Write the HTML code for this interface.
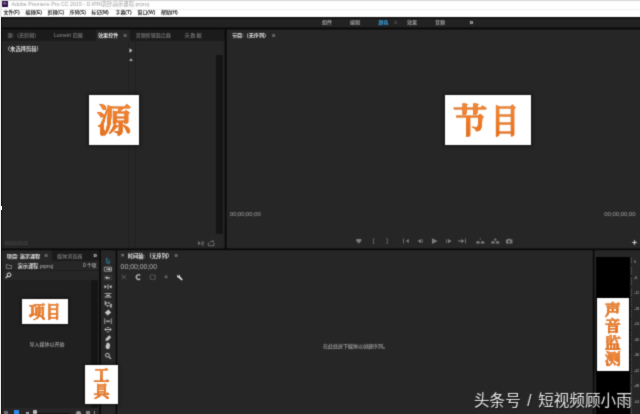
<!DOCTYPE html>
<html lang="zh-CN">
<head>
<meta charset="utf-8">
<title>Adobe Premiere Pro CC 2015</title>
<style>
html,body{margin:0;padding:0;}
body{width:640px;height:414px;overflow:hidden;background:#0c0c0c;position:relative;
 font-family:"Liberation Sans","Noto Sans CJK SC",sans-serif;}
#wrap{position:absolute;left:-10px;top:-10px;width:660px;height:434px;overflow:hidden;background:#0c0c0c;filter:url(#soft);}
#app{position:absolute;left:10px;top:10px;width:640px;height:414px;background:#262626;}
.abs{position:absolute;}
.t{position:absolute;white-space:nowrap;line-height:1;text-shadow:0 0 0.5px currentColor;}
.panel{position:absolute;background:#262626;}
.dk{position:absolute;background:#1b1b1b;}
.trk{position:absolute;background:#151515;}
.lbl.sm span{-webkit-text-stroke:0.3px #ee771f;font-weight:600;}
.lbl.bg span{-webkit-text-stroke:0.45px #ee771f;font-weight:600;}
.lbl{position:absolute;background:#fff;color:#ec7b30;font-family:"Liberation Serif","Noto Serif CJK SC",serif;font-weight:700;text-align:center;box-shadow:0 0 3px 1px rgba(0,0,0,.5);}
.lbl span{display:block;background:linear-gradient(to bottom,#f58d40 12%,#f07a22 50%,#e46a18 88%);-webkit-background-clip:text;background-clip:text;color:transparent;-webkit-text-fill-color:transparent;filter:drop-shadow(0.5px 0.6px 0.5px rgba(140,70,20,.7));}
svg{position:absolute;overflow:visible;}
</style>
</head>
<body>
<svg width="0" height="0" style="position:absolute"><defs><filter id="soft" x="0" y="0" width="100%" height="100%" color-interpolation-filters="sRGB"><feConvolveMatrix order="3" kernelMatrix="0.03 0.1 0.03 0.1 0.48 0.1 0.03 0.1 0.03" divisor="1" edgeMode="duplicate" preserveAlpha="true"/></filter></defs></svg>
<div id="wrap"><div id="app">
 <!-- title bar + menu -->
 <div class="abs" style="left:-10px;top:-10px;width:660px;height:27.4px;background:#fff;"></div>
 <div class="abs" style="left:-10px;top:-10px;width:660px;height:10.7px;background:#d9d6dc;"></div>
 <div class="abs" style="left:2.2px;top:1.4px;width:5.6px;height:5.3px;background:#230c3c;"></div>
 <div class="t" style="left:3.4px;top:2.7px;font-size:3.2px;color:#c9a6ee;font-weight:700;text-shadow:none;">Pr</div>
 <div class="t" style="left:11.5px;top:1.7px;font-size:5.3px;color:#9c9c9c;text-shadow:none;">Adobe Premiere Pro CC 2015 - D:\PR项目\演示课程.prproj</div>
 <div class="abs" style="left:0;top:8.6px;width:640px;height:0.8px;background:#eee;"></div>
 <div class="t" style="left:3.5px;top:10.7px;font-size:4.9px;color:#333;">
  <span style="position:absolute;left:0">文件(F)</span>
  <span style="position:absolute;left:22px">编辑(E)</span>
  <span style="position:absolute;left:44px">剪辑(C)</span>
  <span style="position:absolute;left:66px">序列(S)</span>
  <span style="position:absolute;left:88px">标记(M)</span>
  <span style="position:absolute;left:112px">字幕(T)</span>
  <span style="position:absolute;left:134px">窗口(W)</span>
  <span style="position:absolute;left:157.5px">帮助(H)</span>
 </div>

 <!-- workspace bar -->
 <div class="abs" style="left:1px;top:17.4px;width:649px;height:10.3px;background:linear-gradient(to bottom,#101010 0,#131313 1.4px,#222 2.2px,#222 100%);"></div>
 <div class="t" style="left:322px;top:20.2px;font-size:5px;color:#9a9a9a;">组件</div>
 <div class="t" style="left:350px;top:20.2px;font-size:5px;color:#9a9a9a;">编辑</div>
 <div class="t" style="left:378.5px;top:20.2px;font-size:5px;color:#3aa0e0;">颜色</div>
 <div class="t" style="left:394.5px;top:20px;font-size:5px;color:#555;">≡</div>
 <div class="t" style="left:407px;top:20.2px;font-size:5px;color:#9a9a9a;">效果</div>
 <div class="t" style="left:435px;top:20.2px;font-size:5px;color:#9a9a9a;">音频</div>
 <div class="t" style="left:469.6px;top:18.6px;font-size:7px;color:#c4c4c4;">»</div>

 <!-- source / effect controls panel -->
 <div class="panel" style="left:2px;top:29.6px;width:222.8px;height:218.9px;"></div>
 <div class="dk" style="left:2px;top:29.6px;width:222.8px;height:11.4px;"></div>
 <div class="abs" style="left:95.5px;top:29.6px;width:34.5px;height:11.4px;background:#262626;"></div>
 <div class="t" style="left:7.4px;top:33.2px;font-size:5.1px;color:#6c6c6c;">源:（无剪辑）</div>
 <div class="t" style="left:54px;top:33.2px;font-size:5.1px;color:#6c6c6c;">Lumetri 范围</div>
 <div class="t" style="left:98px;top:33.2px;font-size:5.1px;color:#e2e2e2;">效果控件</div>
 <div class="t" style="left:123.5px;top:32.8px;font-size:5.6px;color:#777;">≡</div>
 <div class="t" style="left:135.8px;top:33.2px;font-size:5px;color:#6c6c6c;">音频剪辑混合器</div>
 <div class="t" style="left:184.5px;top:33.2px;font-size:5.1px;color:#6c6c6c;letter-spacing:0.9px;">元数据</div>
 <div class="t" style="left:4.8px;top:47.4px;font-size:5.3px;color:#d4d4d4;">（未选择剪辑）</div>
 <div class="trk" style="left:215.7px;top:54.5px;width:7px;height:179px;"></div>
 <div class="abs" style="left:128.4px;top:41px;width:0.8px;height:207px;background:#212121;"></div><div class="abs" style="left:135.2px;top:41px;width:0.8px;height:207px;background:#202020;"></div>
 <svg style="left:128.8px;top:48px;" width="4" height="5" viewBox="0 0 4 5"><path d="M0.5 0.3 L3.4 2.5 L0.5 4.7 Z" fill="#cfcfcf"/></svg>
 <svg style="left:129px;top:58px;" width="4" height="3" viewBox="0 0 4 3"><path d="M0.2 2.8 L2 0.4 L3.8 2.8 Z" fill="#cfcfcf"/></svg>
 <div class="t" style="left:5.3px;top:241.4px;font-size:5.8px;color:#454545;transform:scaleX(0.75);transform-origin:0 0;">00;00;00;00</div>
 <svg style="left:197.4px;top:240.4px;" width="19" height="7.4" viewBox="0 0 20 8" fill="none" stroke="#7c7c7c" stroke-width="0.9">
  <path d="M1 1.2 L3.6 3.5 L1 5.8 Z" fill="#7c7c7c" stroke="none"/><path d="M4.6 2 h2 v1.6 h-1.6 v1.8 h2"/>
  <path d="M12 2.8 v3.4 h6 v-3.4"/><path d="M13.6 2.6 q1.5 -2.2 3.6 -1.2 M17.4 0.4 v1.4 h-1.4"/>
 </svg>

 <!-- program panel -->
 <div class="panel" style="left:226.8px;top:29.6px;width:424px;height:218.9px;"></div>
 <div class="t" style="left:232px;top:33.2px;font-size:5.1px;color:#e2e2e2;">节目:（无序列）</div>
 <div class="t" style="left:272px;top:32.8px;font-size:5.6px;color:#777;">≡</div>
 <div class="t" style="left:230px;top:212px;font-size:5.8px;color:#7c7c7c;">00;00;00;00</div>
 <div class="t" style="left:604.3px;top:212px;font-size:5.95px;color:#7c7c7c;">00;00;00;00</div>
 <!-- transport -->
 <svg style="left:350px;top:236px;" width="170" height="10" viewBox="0 0 170 10" fill="#7e7e7e" stroke="none">
  <path d="M6.3 3 h5 v2 l-2.5 2.4 l-2.5 -2.4 z"/>
  <path d="M24.3 2.6 h-0.9 v5 h0.9" fill="none" stroke="#7e7e7e" stroke-width="0.7"/>
  <path d="M36.4 2.6 h0.9 v5 h-0.9" fill="none" stroke="#7e7e7e" stroke-width="0.7"/>
  <path d="M53 2.6 h0.8 v5 h-0.8 z M54.6 5.1 h1.2 v-0 l3 -2 v4 l-3 -2 z"/>
  <path d="M67.5 5.1 l3.6 -2.2 v4.4 z M71.8 3.2 h0.8 v3.8 h-0.8 z"/>
  <path d="M82 2.2 l5.6 2.9 l-5.6 2.9 z"/>
  <path d="M96.3 3.2 h0.8 v3.8 h-0.8 z M98 2.9 l3.6 2.2 l-3.6 2.2 z"/>
  <path d="M108 4.6 h3.4 v-1.6 l3 2.1 l-3 2.1 v-1.6 h-3.4 z M115 2.6 h0.8 v5 h-0.8 z"/>
  <path d="M126.2 7.6 a1.9 1.9 0 1 1 3.6 0 z M130.8 7.6 a1.9 1.9 0 1 1 3.6 0 z M129.6 3.4 l0.7 -1.6 l0.7 1.6 z"/>
  <path d="M141.2 7.6 a1.9 1.9 0 1 1 3.6 0 z M145.8 7.6 a1.9 1.9 0 1 1 3.6 0 z M143.6 3.6 h1 v-1 h1.4 v1 h1 l-1.7 1.4 z"/>
  <path d="M156 3.6 h1.6 l0.6 -0.9 h2 l0.6 0.9 h1.6 v4 h-6.4 z"/>
  <circle cx="159.2" cy="5.6" r="1.1" fill="#242424"/>
 </svg>
 <svg style="left:630.5px;top:238.5px;" width="7" height="7" viewBox="0 0 7 7"><path d="M3.5 1.2 v4.6 M1.2 3.5 h4.6" stroke="#cfcfcf" stroke-width="1.2" fill="none"/></svg>

 <!-- project panel -->
 <div class="panel" style="left:2px;top:250.2px;width:97.3px;height:174px;"></div>
 <div class="abs" style="left:4px;top:280px;width:86.5px;height:127.5px;background:#202020;"></div>
 <div class="dk" style="left:51.5px;top:250.2px;width:47.8px;height:10.6px;"></div>
 <div class="t" style="left:6.8px;top:253.6px;font-size:5.1px;color:#e2e2e2;">项目: 演示课程</div>
 <div class="t" style="left:44.5px;top:253.2px;font-size:5.6px;color:#777;">≡</div>
 <div class="t" style="left:57.3px;top:253.6px;font-size:5px;color:#6c6c6c;">媒体浏览器</div>
 <div class="t" style="left:93.2px;top:252px;font-size:7px;color:#c4c4c4;">»</div>
 <svg style="left:5.8px;top:263.6px;" width="6" height="5.2" viewBox="0 0 7 6"><path d="M0.5 0.8 h2.2 l0.7 0.9 h3 v3.6 h-5.9 z" fill="none" stroke="#9a9a9a" stroke-width="0.8"/></svg>
 <div class="t" style="left:17.5px;top:263.5px;font-size:5.2px;color:#d4d4d4;">演示课程<span style="color:#8a8a8a">.prproj</span></div>
 <div class="t" style="left:83px;top:263.8px;font-size:4.8px;color:#9a9a9a;">0 个项</div>
 <div class="abs" style="left:2px;top:269.7px;width:97.3px;height:0.9px;background:#1e1e1e;"></div>
 
 <svg style="left:4.5px;top:271.8px;" width="7" height="7" viewBox="0 0 7 7"><circle cx="4" cy="2.8" r="1.9" fill="none" stroke="#e6e6e6" stroke-width="1"/><path d="M2.6 4.2 L0.7 6.2" stroke="#e6e6e6" stroke-width="1.2"/></svg>
 <div class="trk" style="left:90.5px;top:280px;width:7px;height:127.5px;"></div>
 <div class="t" style="left:29.6px;top:341.6px;font-size:5px;color:#8c8c8c;">导入媒体以开始</div>
 <!-- project bottom bar -->
 <div class="abs" style="left:3.5px;top:411px;width:4.5px;height:4px;background:#6e6e6e;"></div>
 <div class="abs" style="left:14.3px;top:410.3px;width:4.8px;height:5px;background:#2d8ceb;"></div>
 <div class="abs" style="left:26px;top:412px;width:3px;height:2px;background:#aaa;"></div>
 <div class="abs" style="left:33px;top:410px;width:3.5px;height:4px;background:#bbb;border-radius:1px 1px 0 0;"></div>
 <div class="abs" style="left:37px;top:412.6px;width:32px;height:1.4px;background:#111;"></div>
 <div class="abs" style="left:76px;top:410.5px;width:5px;height:4px;background:#999;border-radius:2.5px 2.5px 0 0;"></div>
 <div class="abs" style="left:86px;top:410.5px;width:4px;height:4px;background:#888;"></div>
 <div class="abs" style="left:93.5px;top:410.5px;width:1.5px;height:4px;background:#888;"></div>

 <!-- tools panel -->
 <div class="panel" style="left:100.9px;top:250.2px;width:14.8px;height:174px;"></div>
 <svg style="left:102px;top:254px;" width="13" height="108" viewBox="0 0 13 108" fill="#c6c6c6" stroke="none">
  <!-- selection (active, blue) -->
  <path d="M4.4 3.9 L4.4 9.2 L5.6 8.1 L6.5 10 L7.3 9.6 L6.5 7.8 L8 7.6 Z" fill="none" stroke="#35809f" stroke-width="0.8"/>
  <!-- track select fwd -->
  <path d="M2.3 13.2 h7.2 v4 h-7.2 z" fill="none" stroke="#c6c6c6" stroke-width="0.7"/><path d="M4.4 14.6 h2.6 v-0.9 l2 1.5 l-2 1.5 v-0.9 h-2.6 z"/>
  <!-- track select back -->
  <path d="M2.5 21.8 h7.2 v4 h-7.2 z" fill="none" stroke="#777" stroke-width="0.6" stroke-dasharray="1 1"/><path d="M7.8 23.2 h-2.6 v-0.9 l-2.4 1.5 l2.4 1.5 v-0.9 h2.6 z"/>
  <!-- ripple -->
  <path d="M5.6 30.2 h0.9 v5 h-0.9 z M5 32.7 l-2.6 -1.7 v3.4 z M7.1 32.7 l2.6 -1.7 v3.4 z"/>
  <!-- rolling -->
  <path d="M2.6 39.2 h6.8 v0.9 h-6.8 z M2.6 42.6 h6.8 v0.9 h-6.8 z M4.4 40.8 h3.4 v1.1 h-3.4 z"/>
  <!-- rate stretch -->
  <path d="M3 47.4 h0.8 v3.4 h-0.8 z M4 49.1 h2.6 v-1 l1.6 1.4 M8.6 50 h0.8 v3.4 h-0.8 z M8.4 51.7 h-2.6 v1 l-1.6 -1.4" stroke="#c6c6c6" stroke-width="0.6"/>
  <!-- razor -->
  <path d="M2.8 58.6 l3.6 -3.2 l2.8 3 l-3.6 3.2 z"/>
  <!-- slip -->
  <path d="M2.4 64.4 h0.8 v5.6 h-0.8 z M8.8 64.4 h0.8 v5.6 h-0.8 z M3.8 67.2 l1.6 -1.3 v0.9 h1.2 v-0.9 l1.6 1.3 l-1.6 1.3 v-0.9 h-1.2 v0.9 z"/>
  <!-- slide -->
  <path d="M2.2 75.6 l1.8 -1.5 v1 h4 v-1 l1.8 1.5 l-1.8 1.5 v-1 h-4 v1 z M4.6 73 h2.8 v0.8 h-2.8 z M4.6 77.4 h2.8 v0.8 h-2.8 z"/>
  <!-- pen -->
  <path d="M3.4 87 l0.6 -2.6 l3.2 -3.2 l2 2 l-3.2 3.2 z"/>
  <!-- hand -->
  <path d="M3.6 92.4 q0 -1.6 0.8 -1.6 v-1.6 h0.8 v-0.6 h0.9 v0.4 h0.9 v0.5 h0.9 v2 q0 2.6 -1 3.6 h-2.2 q-1.1 -1.3 -1.1 -2.7 z"/>
  <!-- zoom -->
  <circle cx="5.4" cy="101.2" r="1.9" fill="none" stroke="#c6c6c6" stroke-width="1"/><path d="M6.9 102.7 L9 104.9" stroke="#c6c6c6" stroke-width="1.2"/>
 </svg>

 <!-- timeline panel -->
 <div class="panel" style="left:117.2px;top:250.2px;width:475.6px;height:174px;"></div>
 <div class="t" style="left:121px;top:253px;font-size:5.6px;color:#9a9a9a;">×</div>
 <div class="t" style="left:127.8px;top:253.6px;font-size:5.2px;color:#e2e2e2;">时间轴: （无序列）</div>
 <div class="t" style="left:174.5px;top:253.2px;font-size:5.6px;color:#777;">≡</div>
 <div class="t" style="left:120.6px;top:263.6px;font-size:6.9px;color:#8a8a8a;">00;00;00;00</div>
 <svg style="left:120px;top:272.5px;" width="66" height="8" viewBox="0 0 66 8" fill="none">
  <path d="M1.6 1.6 L6 6.4 M6 1.6 L1.6 6.4 M2 4 h3.6" stroke="#5c5c5c" stroke-width="0.8"/>
  <path d="M20.2 2.4 a2.3 2.3 0 1 0 0 3.4" stroke="#bdbdbd" stroke-width="1.3"/>
  <path d="M30.4 2 h4.6 v4.4 h-4.6 z M29.6 3 h1 M29.6 5.2 h1 M35 3 h1 M35 5.2 h1" stroke="#5c5c5c" stroke-width="0.8"/>
  <path d="M44.6 2.4 h3 v1.8 l-1.5 1.6 l-1.5 -1.6 z" fill="#5c5c5c"/>
  <path d="M58.2 1.4 a2 2 0 0 0 -0.4 3.2 l0.9 0.2 l3 2.6 l1 -1 l-2.8 -2.8 l-0.1 -0.9 a2 2 0 0 0 -0.4 -1.1 l-0.6 1.4 l-0.9 -0.3 z" fill="#efefef"/>
 </svg>
 <div class="t" style="left:323px;top:343.6px;font-size:5px;color:#8c8c8c;">在此处放下媒体以创建序列。</div>

 <!-- audio meters -->
 <div class="panel" style="left:594.4px;top:250.2px;width:56px;height:174px;"></div>
 <div class="abs" style="left:596.3px;top:257.4px;width:34px;height:167px;background:#000;"></div>
 <div class="abs" style="left:630.6px;top:258px;width:1.4px;height:166px;background:repeating-linear-gradient(to bottom,#666 0,#666 0.9px,transparent 0.9px,transparent 2.2px);"></div>
 <div class="t" style="left:634px;top:255.1px;font-size:3.6px;color:#8a8a8a;line-height:15.5px;">0<br>-6<br>-12<br>-18<br>-24<br>-30<br>-36<br>-42<br>-48<br>-54</div>

 <!-- dividers -->
 <svg style="left:0;top:0;" width="650" height="424" viewBox="0 0 650 424" fill="#090909">
  <rect x="0" y="27.5" width="650" height="2"/>
  <rect x="0" y="248.4" width="650" height="1.8"/>
  <rect x="224.7" y="28" width="1.9" height="221"/>
  <rect x="99.2" y="249" width="1.7" height="175"/>
  <rect x="115.7" y="249" width="1.5" height="175"/>
  <rect x="592.8" y="249" width="1.6" height="175"/>
  <rect x="0" y="17" width="2" height="407"/>
 </svg>

 <!-- overlay labels -->
 <div class="lbl bg" style="left:89px;top:94.5px;width:50px;height:50px;font-size:33.5px;line-height:52.6px;"><span style="transform:scaleX(1.04)">源</span></div>
 <div class="lbl bg" style="left:444.5px;top:94.5px;width:86.5px;height:50px;font-size:34px;line-height:53px;"><span style="display:inline-block;transform:scaleX(1.02)">节</span><span style="display:inline-block;transform:scaleX(0.82);margin-left:0.6px;">目</span></div>
 <div class="lbl sm" style="left:22px;top:298.5px;width:46px;height:25.7px;font-size:16.5px;line-height:28.8px;"><span style="display:inline-block;">项</span><span style="display:inline-block;transform:scaleX(0.88);margin-left:-0.4px;">目</span></div>
 <div class="lbl sm" style="left:85.1px;top:364.9px;width:32.7px;height:39px;font-size:16px;line-height:16.6px;"><div style="padding-top:2.9px"><span>工</span><span>具</span></div></div>
 <div class="lbl sm" style="left:597.4px;top:298.3px;width:31.6px;height:72.7px;font-size:15px;line-height:16.4px;"><div style="padding-top:3.6px;transform:scaleX(1.07);"><span>声</span><span>音</span><span>监</span><span>测</span></div></div>

 <!-- watermark -->
 <div class="t" style="left:474px;top:392.8px;font-size:15.6px;color:#e9e9e9;word-spacing:2.2px;text-shadow:0.6px 0.8px 1px rgba(0,0,0,.8);">头条号 / 短视频顾小雨</div>

</div></div>
<!-- left window edge -->
<div class="abs" style="left:0;top:0;width:1px;height:414px;background:#e9e9e9;"></div>
<div class="abs" style="left:1px;top:0;width:0.6px;height:414px;background:rgba(120,120,120,.12);"></div>
<div class="abs" style="left:0;top:205.6px;width:2.4px;height:4.2px;background:#f6f6f6;"></div>
</body>
</html>
